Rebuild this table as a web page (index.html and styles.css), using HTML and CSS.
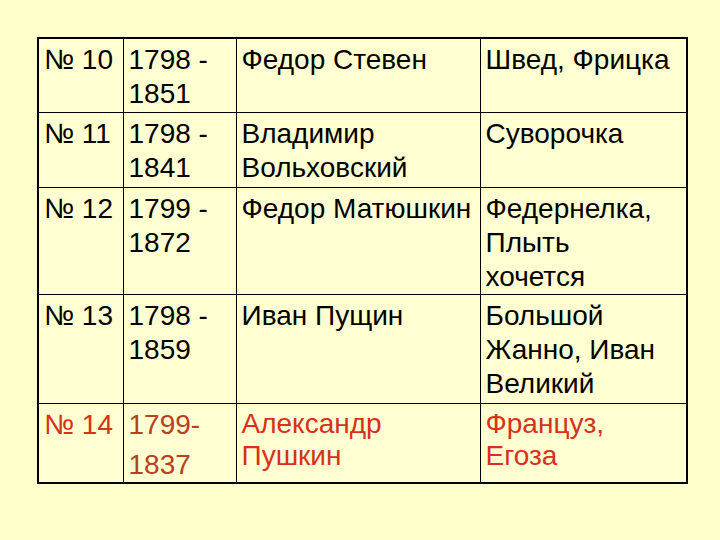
FILE: index.html
```html
<!DOCTYPE html>
<html>
<head>
<meta charset="utf-8">
<link rel="stylesheet" href="styles.css">
</head>
<body>
<table class="roster">
  <colgroup>
    <col class="c-num"><col class="c-years"><col class="c-name"><col class="c-nick">
  </colgroup>
  <tr class="r1">
    <td>№ 10</td><td>1798 -<br>1851</td><td>Федор Стевен</td><td>Швед, Фрицка</td>
  </tr>
  <tr class="r2">
    <td>№ 11</td><td>1798 -<br>1841</td><td>Владимир<br>Вольховский</td><td>Суворочка</td>
  </tr>
  <tr class="r3">
    <td>№ 12</td><td>1799 -<br>1872</td><td>Федор Матюшкин</td><td>Федернелка,<br>Плыть<br>хочется</td>
  </tr>
  <tr class="r4">
    <td>№ 13</td><td>1798 -<br>1859</td><td>Иван Пущин</td><td>Большой<br>Жанно, Иван<br>Великий</td>
  </tr>
  <tr class="r5 hl">
    <td>№ 14</td><td class="years">1799-<br><span class="tall">1837</span></td><td class="tight">Александр<br>Пушкин</td><td class="tight">Француз,<br>Егоза</td>
  </tr>
</table>
</body>
</html>
```

FILE: styles.css
```css
html, body {
  margin: 0;
  padding: 0;
  background: #ffffcc;
}
body {
  width: 720px;
  height: 540px;
  overflow: hidden;
}
.roster {
  border-collapse: collapse;
  table-layout: fixed;
  width: 649px;
  margin: 37px 0 0 37px;
  border: 2px solid #000;
  font-family: "Liberation Sans", Arial, Helvetica, sans-serif;
  font-size: 28px;
  line-height: 34px;
  color: #000;
  background: #ffffd2;
}
.c-num { width: 85px; }
.c-years { width: 113px; }
.c-name { width: 244px; }
.c-nick { width: 207px; }
.roster td {
  border: 1px solid #000;
  vertical-align: top;
  padding: 4px 0 0 5px;
  white-space: nowrap;
  overflow: hidden;
}
.r1 { height: 74px; }
.r2 { height: 75px; }
.r3 { height: 107px; }
.r4 { height: 109px; }
.r5 { height: 80px; }
.hl td { color: #d8301a; }
.hl td.years { color: #b8401f; }
.hl td.tight { line-height: 32px; }
.tall { display: inline-block; margin-top: 6px; }
```
